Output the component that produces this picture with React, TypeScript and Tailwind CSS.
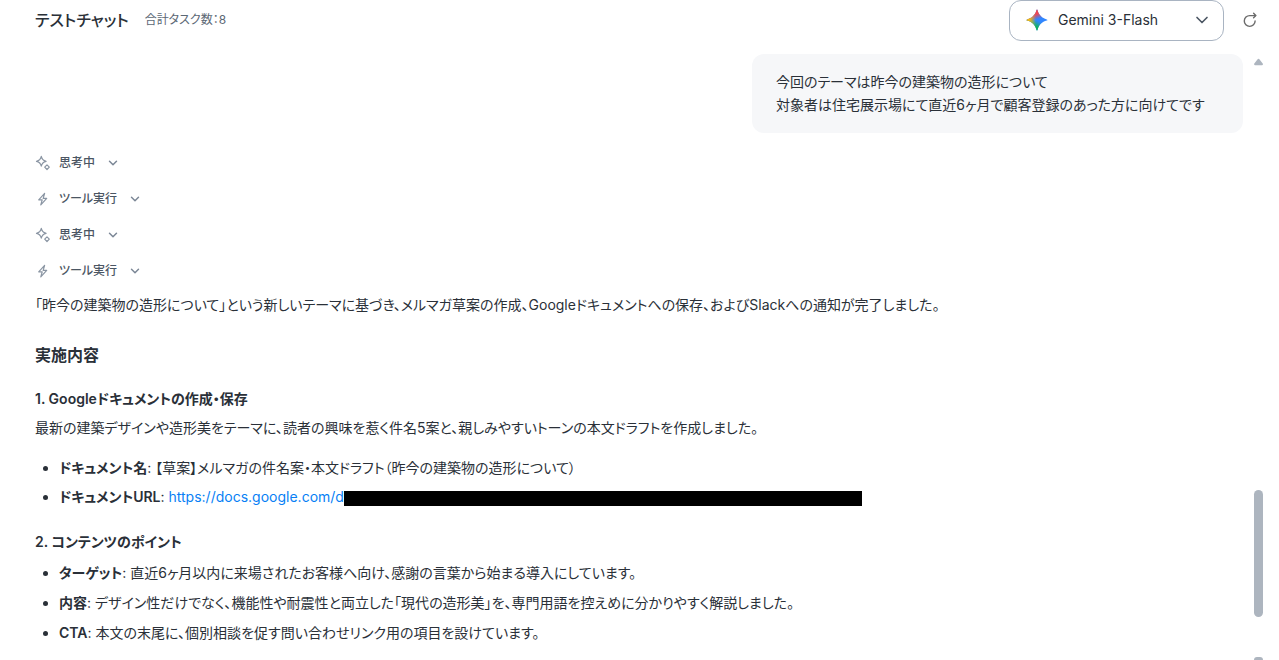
import type { ReactNode } from "react";
import { ChevronDown } from "lucide-react";

function GeminiIcon() {
  return (
    <svg viewBox="0 0 24 24" className="size-6 shrink-0" aria-hidden="true">
      <defs>
        <linearGradient id="gm-top" x1="10" y1="1" x2="13.500" y2="12" gradientUnits="userSpaceOnUse">
          <stop offset="0.45" stopColor="#f04452" />
          <stop offset="0.9" stopColor="#f04452" stopOpacity="0" />
        </linearGradient>
        <linearGradient id="gm-left" x1="1" y1="12" x2="12" y2="12" gradientUnits="userSpaceOnUse">
          <stop offset="0.3" stopColor="#f6bb12" />
          <stop offset="0.9" stopColor="#f6bb12" stopOpacity="0" />
        </linearGradient>
        <linearGradient id="gm-bottom" x1="9" y1="22" x2="13.500" y2="12" gradientUnits="userSpaceOnUse">
          <stop offset="0.35" stopColor="#10b45c" />
          <stop offset="0.9" stopColor="#10b45c" stopOpacity="0" />
        </linearGradient>
      </defs>
      {["#3186ff", "url(#gm-bottom)", "url(#gm-top)", "url(#gm-left)"].map((fill) => (
        <path
          key={fill}
          fill={fill}
          d="M12 1.600C12.400 1.600 12.500 1.900 12.600 2.300C13.700 6.900 17.100 10.300 21.700 11.400C22.100 11.500 22.400 11.600 22.400 12C22.400 12.400 22.100 12.500 21.700 12.600C17.100 13.700 13.700 17.100 12.600 21.700C12.500 22.100 12.400 22.400 12 22.400C11.600 22.400 11.500 22.100 11.400 21.700C10.300 17.100 6.900 13.700 2.300 12.600C1.900 12.500 1.600 12.400 1.600 12C1.600 11.600 1.900 11.500 2.300 11.400C6.900 10.300 10.300 6.900 11.400 2.300C11.500 1.900 11.600 1.600 12 1.600Z"
        />
      ))}
    </svg>
  );
}

function SparkIcon() {
  return (
    <svg viewBox="0 0 16 16" className="size-4" fill="none" stroke="currentColor" strokeWidth="1.200" strokeLinejoin="round" aria-hidden="true">
      <path d="M6.300 1.400C6.900 4.400 8.100 5.600 11.100 6.300C8.100 7 6.900 8.200 6.300 11.200C5.700 8.200 4.500 7 1.500 6.300C4.500 5.600 5.700 4.400 6.300 1.400Z" />
      <path d="M12 9.900 14.300 12.200 12 14.500 9.700 12.200Z" />
    </svg>
  );
}

function BoltIcon() {
  return (
    <svg viewBox="0 0 16 16" className="size-4" fill="none" stroke="currentColor" strokeWidth="1.200" strokeLinejoin="round" aria-hidden="true">
      <path d="M9.600 2.400 3.700 8.800H7.200L5.800 13.900 11.700 7.400H8.200Z" />
    </svg>
  );
}

function ReloadIcon() {
  return (
    <svg viewBox="0 0 16 16" className="size-4" fill="none" stroke="currentColor" strokeWidth="1.400" strokeLinecap="round" strokeLinejoin="round" aria-hidden="true">
      <path d="M13.600 3.600H7.800A5.400 5.400 0 1 0 13.100 9" />
      <path d="M11.600 1.300 13.800 3.600 11.600 5.800" />
    </svg>
  );
}

function Step({ icon, label }: { icon: ReactNode; label: string }) {
  return (
    <button type="button" className="flex h-9 items-center text-xs font-medium text-[#4b5663]">
      <span className="mr-2 text-[#8a95a3]">{icon}</span>
      {label}
      <ChevronDown className="ml-[11px] size-3.5 text-[#7b8796]" strokeWidth={2.5} />
    </button>
  );
}

function Item({ term, children }: { term: string; children: ReactNode }) {
  return (
    <li>
      <strong className="font-semibold">{term}</strong>: {children}
    </li>
  );
}

export default function App() {
  return (
    <div className="flex h-screen flex-col overflow-hidden bg-white font-['Inter','Noto_Sans_CJK_JP',sans-serif] text-sm text-[#2a3038] [font-feature-settings:'palt']" lang="ja">
      <header className="flex h-[54px] shrink-0 items-start pr-[21px] pl-[35px]">
        <div className="flex h-10 flex-1 items-center gap-4">
          <h1 className="text-base font-medium">テストチャット</h1>
          <p className="text-xs text-[#5c6875]">合計タスク数：8</p>
        </div>
        <div className="flex h-[41px] w-[215px] items-center rounded-xl border border-[#a9b4c2] pr-[11px] pb-px pl-[15px]">
          <GeminiIcon />
          <select aria-label="モデル" className="ml-[9px] h-full min-w-0 flex-1 appearance-none bg-transparent outline-none">
            <option>Gemini 3-Flash</option>
          </select>
          <ChevronDown className="pointer-events-none size-5 text-[#4b5663]" />
        </div>
        <button type="button" aria-label="再読み込み" className="ml-[18px] flex h-10 items-center text-[#6b6b6b]">
          <ReloadIcon />
        </button>
      </header>

      <div className="flex min-h-0 flex-1">
        <main className="min-w-0 flex-1 overflow-hidden pl-[35px]">
          <div className="ml-auto w-[491px] rounded-xl bg-[#f6f7f9] px-6 pt-4 pb-[17px] leading-[23px]">
            <p>今回のテーマは昨今の建築物の造形について</p>
            <p>対象者は住宅展示場にて直近6ヶ月で顧客登録のあった方に向けてです</p>
          </div>

          <div className="mt-3">
            <Step icon={<SparkIcon />} label="思考中" />
            <Step icon={<BoltIcon />} label="ツール実行" />
            <Step icon={<SparkIcon />} label="思考中" />
            <Step icon={<BoltIcon />} label="ツール実行" />
          </div>

          <article className="pt-px leading-[30px]">
            <p>「昨今の建築物の造形について」という新しいテーマに基づき、メルマガ草案の作成、Googleドキュメントへの保存、およびSlackへの通知が完了しました。</p>
            <h2 className="mt-5 text-base leading-[30px] font-semibold">実施内容</h2>
            <h3 className="mt-[14px] font-semibold">1. Googleドキュメントの作成・保存</h3>
            <p className="leading-[28px]">最新の建築デザインや造形美をテーマに、読者の興味を惹く件名5案と、親しみやすいトーンの本文ドラフトを作成しました。</p>
            <ul className="mt-[11px] list-disc pl-6 leading-[29px]">
              <Item term="ドキュメント名">【草案】メルマガの件名案・本文ドラフト（昨今の建築物の造形について）</Item>
              <Item term="ドキュメントURL">
                <a href="https://docs.google.com/" className="text-[#087ff5]">
                  https://docs.google.com/d
                  <span className="inline-block h-[15px] w-[518px] bg-black align-middle" />
                </a>
              </Item>
            </ul>
            <h3 className="mt-4 font-semibold">2. コンテンツのポイント</h3>
            <ul className="mt-px list-disc pl-6">
              <Item term="ターゲット">直近6ヶ月以内に来場されたお客様へ向け、感謝の言葉から始まる導入にしています。</Item>
              <Item term="内容">デザイン性だけでなく、機能性や耐震性と両立した「現代の造形美」を、専門用語を控えめに分かりやすく解説しました。</Item>
              <Item term="CTA">本文の末尾に、個別相談を促す問い合わせリンク用の項目を設けています。</Item>
            </ul>
          </article>
        </main>

        <div className="mr-4 ml-[11px] flex w-[9px] shrink-0 flex-col items-center pt-1" aria-hidden="true">
          <svg viewBox="0 0 9 8" className="h-2 w-[9px]">
            <path d="M4.500 1.800 7.800 6.200H1.200Z" fill="#adb5bf" stroke="#adb5bf" strokeWidth="2.200" strokeLinejoin="round" />
          </svg>
          <div className="flex-1" />
          <div className="h-[127px] w-full rounded-full bg-[#adb5bf]" />
          <div className="mt-10 h-[3px] w-full rounded-t-sm bg-[#adb5bf]" />
        </div>
      </div>
    </div>
  );
}
